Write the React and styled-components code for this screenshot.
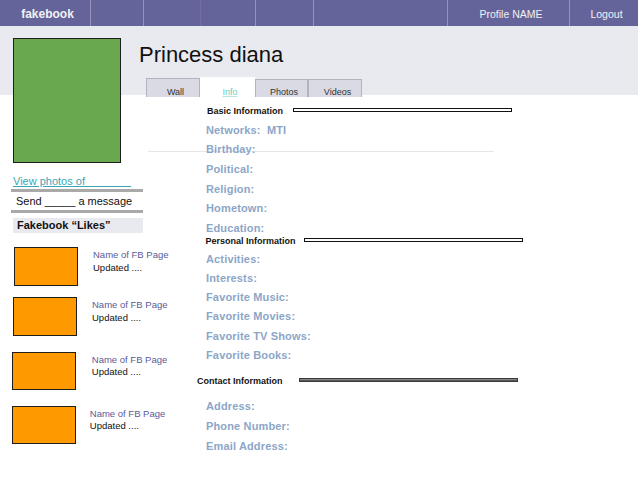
import React from 'react';
import styled, { createGlobalStyle } from 'styled-components';

const GlobalStyle = createGlobalStyle`
  html, body {
    margin: 0;
    padding: 0;
    background: #fff;
  }
  body {
    font-family: "Liberation Sans", Arial, sans-serif;
  }
  * {
    box-sizing: border-box;
  }
`;

const navCells = [
  { label: 'fakebook', width: 91, brand: true },
  { width: 53 },
  { width: 57, faint: true },
  { width: 55 },
  { width: 58 },
  { width: 134 },
  { label: 'Profile NAME', width: 122 },
  { label: 'Logout' }
];

const tabs = [
  { label: 'Wall', width: 54, height: 19 },
  { label: 'Info', width: 55, height: 20, active: true },
  { label: 'Photos', width: 53, height: 18 },
  { label: 'Videos', width: 54, height: 18 }
];

const sections = [
  {
    title: 'Basic Information',
    labelWidth: 86,
    indent: 1,
    top: 0,
    headGap: 0,
    gap: 5.7,
    fields: ['Networks:  MTI', 'Birthday:', 'Political:', 'Religion:', 'Hometown:', 'Education:']
  },
  {
    title: 'Personal Information',
    labelWidth: 98,
    indent: -0.5,
    top: -0.5,
    headGap: 0,
    gap: 5.2,
    fields: ['Activities:', 'Interests:', 'Favorite Music:', 'Favorite Movies:', 'Favorite TV Shows:', 'Favorite Books:']
  },
  {
    title: 'Contact Information',
    labelWidth: 102,
    indent: -9,
    top: 13,
    headGap: 6.3,
    gap: 6,
    dark: true,
    fields: ['Address:', 'Phone Number:', 'Email Address:']
  }
];

const likes = [
  { top: 14, left: 3, gap: 15 },
  { top: 11.8, left: 2, gap: 15 },
  { top: 15.9, left: 1.3, gap: 15.5 },
  { top: 15.5, left: 1.3, gap: 13.5 }
];

const App = () => (
  <>
    <GlobalStyle />
    <Page>
      <TopBar>
        {navCells.map((cell, i) => (
          <NavCell key={i} $width={cell.width} $faint={cell.faint} $brand={cell.brand}>
            {cell.label}
          </NavCell>
        ))}
      </TopBar>

      <Body>
        <LeftCol>
          <ProfilePhoto />
          <PhotosLink>View photos of _______</PhotosLink>
          <Bar />
          <SendLine>Send _____ a message</SendLine>
          <Bar $top={2} />
          <LikesTitle>Fakebook “Likes”</LikesTitle>
          {likes.map((like, i) => (
            <LikeItem key={i} $top={like.top} $left={like.left} $gap={like.gap}>
              <LikeThumb />
              <LikeText>
                <LikeName>Name of FB Page</LikeName>
                <LikeUpdated>Updated ....</LikeUpdated>
              </LikeText>
            </LikeItem>
          ))}
        </LeftCol>

        <RightCol>
          <ProfileName>Princess diana</ProfileName>
          <TabRow>
            {tabs.map((tab) => (
              <Tab key={tab.label} $width={tab.width} $height={tab.height} $active={tab.active}>
                {tab.label}
              </Tab>
            ))}
          </TabRow>

          <InfoPanel>
            <InfoContent>
              {sections.map((section) => (
                <Section key={section.title} $top={section.top} $gap={section.gap}>
                  <SectionHead $indent={section.indent} $after={section.headGap}>
                    <SectionTitle $width={section.labelWidth}>{section.title}</SectionTitle>
                    <Rule $dark={section.dark} />
                  </SectionHead>
                  {section.fields.map((field) => (
                    <Field key={field}>{field}</Field>
                  ))}
                </Section>
              ))}
            </InfoContent>
          </InfoPanel>
        </RightCol>
      </Body>
    </Page>
  </>
);

export default App;

const Page = styled.div`
  width: 100%;
  min-height: 479px;
  background: #fff;
`;

const TopBar = styled.header`
  display: flex;
  height: 26px;
  background: #65649a;
`;

const NavCell = styled.div`
  flex: ${({ $width }) => ($width ? `0 0 ${$width}px` : '1 1 auto')};
  display: flex;
  align-items: center;
  justify-content: center;
  padding: 2px 0 0 5px;
  border-right: ${({ $width, $faint }) =>
    !$width ? 'none' : $faint ? '1px solid rgba(255,255,255,0.08)' : '1px solid rgba(255,255,255,0.3)'};
  color: #f1f1f5;
  font-size: ${({ $brand }) => ($brand ? '12px' : '10.5px')};
  font-weight: ${({ $brand }) => ($brand ? 700 : 400)};
  white-space: nowrap;
`;

const Body = styled.main`
  display: flex;
  background: linear-gradient(to bottom, #e9eaf0 0, #e9eaf0 69px, #fff 69px);
  min-height: 453px;
`;

const LeftCol = styled.aside`
  flex: 0 0 139px;
  min-width: 0;
  display: flex;
  flex-direction: column;
  align-items: flex-start;
  padding-left: 11px;
`;

const ProfilePhoto = styled.div`
  width: 108px;
  height: 125px;
  margin: 12px 0 0 2px;
  background: #6aa84f;
  border: 1px solid #1e1e1e;
`;

const PhotosLink = styled.a`
  margin: 11px 0 0 2px;
  line-height: 14px;
  font-size: 11px;
  color: #3ba7b5;
  text-decoration: underline;
  white-space: nowrap;
`;

const Bar = styled.div`
  flex: 0 0 auto;
  width: 132px;
  height: 3px;
  margin-top: ${({ $top = 1 }) => $top}px;
  background: #a9a9a9;
`;

const SendLine = styled.div`
  margin-top: 2px;
  padding-left: 5px;
  line-height: 14px;
  font-size: 11px;
  color: #111;
  white-space: nowrap;
`;

const LikesTitle = styled.div`
  flex: 0 0 auto;
  width: 130px;
  height: 15px;
  margin: 5px 0 0 2px;
  padding-left: 4px;
  line-height: 15px;
  background: #e9eaf0;
  font-size: 11px;
  font-weight: 700;
  color: #111;
  white-space: nowrap;
`;

const LikeItem = styled.div`
  display: flex;
  align-items: flex-start;
  gap: ${({ $gap }) => $gap}px;
  margin: ${({ $top }) => $top}px 0 0 ${({ $left }) => $left}px;
`;

const LikeThumb = styled.div`
  flex: 0 0 64px;
  height: 38.5px;
  background: #ff9900;
  border: 1px solid #1e1e1e;
`;

const LikeText = styled.div`
  display: flex;
  flex-direction: column;
  padding-top: 2px;
  font-size: 9.5px;
  line-height: 12.5px;
  white-space: nowrap;
`;

const LikeName = styled.span`
  color: #5a5a99;
`;

const LikeUpdated = styled.span`
  color: #111;
`;

const RightCol = styled.section`
  flex: 1 1 auto;
  min-width: 0;
  display: flex;
  flex-direction: column;
`;

const ProfileName = styled.h1`
  margin: 0;
  padding-top: 17px;
  line-height: 24px;
  font-size: 22px;
  font-weight: 400;
  color: #111;
`;

const TabRow = styled.nav`
  display: flex;
  align-items: flex-end;
  height: 20px;
  margin: 10px 0 0 7px;
`;

const Tab = styled.div`
  flex: 0 0 ${({ $width }) => $width}px;
  height: ${({ $height }) => $height}px;
  display: flex;
  align-items: flex-end;
  justify-content: center;
  padding-left: 5px;
  line-height: 10px;
  font-size: 9px;
  background: ${({ $active }) => ($active ? '#fff' : '#d9dae4')};
  border: ${({ $active }) => ($active ? 'none' : '1px solid #b3b3bd')};
  border-bottom: none;
  color: ${({ $active }) => ($active ? '#6ccabd' : '#333')};
  text-decoration: ${({ $active }) => ($active ? 'underline' : 'none')};
  text-decoration-color: #b8e6e0;
`;

const InfoPanel = styled.div`
  position: relative;
  padding: 8px 0 0 67px;

  &::before {
    content: '';
    position: absolute;
    left: 9px;
    top: 54px;
    width: 346px;
    height: 1px;
    background: #e6e6ea;
  }
`;

const InfoContent = styled.div`
  position: relative;
  z-index: 1;
  display: flex;
  flex-direction: column;
`;

const Section = styled.div`
  display: flex;
  flex-direction: column;
  gap: ${({ $gap }) => $gap}px;
  margin-top: ${({ $top }) => $top}px;
`;

const SectionHead = styled.div`
  display: flex;
  align-items: center;
  height: 12px;
  margin-left: ${({ $indent }) => $indent}px;
  margin-bottom: ${({ $after }) => $after}px;
`;

const SectionTitle = styled.span`
  flex: 0 0 ${({ $width }) => $width}px;
  font-size: 9px;
  font-weight: 700;
  color: #111;
  white-space: nowrap;
`;

const Rule = styled.div`
  flex: 0 0 219px;
  height: 4px;
  margin-bottom: 2px;
  border: 1px solid ${({ $dark }) => ($dark ? '#3a3a3a' : '#111')};
  background: ${({ $dark }) => ($dark ? 'linear-gradient(#9a9a9a, #444)' : '#fff')};
`;

const Field = styled.div`
  line-height: 14px;
  font-size: 11px;
  font-weight: 700;
  letter-spacing: 0.15px;
  color: #8ca6c8;
  white-space: pre;
`;
